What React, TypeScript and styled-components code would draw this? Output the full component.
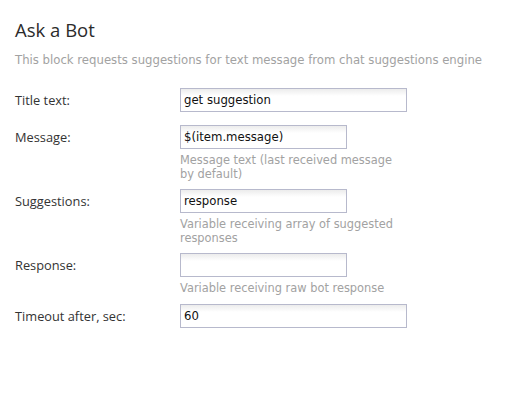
import styled, { createGlobalStyle } from "styled-components";

const GlobalStyle = createGlobalStyle`
  body {
    margin: 0;
    background: #ffffff;
    font-family: "Open Sans", "Liberation Sans", sans-serif;
  }
`;

const Page = styled.div`
  padding: 17px 15px 0 15px;
  width: 513px;
  box-sizing: border-box;
`;

const Title = styled.h2`
  margin: 0;
  font-family: "Open Sans", sans-serif;
  font-weight: 400;
  font-size: 18.5px;
  line-height: 26px;
  color: #2b2b2b;
`;

const Description = styled.p`
  margin: 9px 0 20px 0;
  font-family: "DejaVu Sans", Verdana, sans-serif;
  font-size: 11.7px;
  line-height: 16px;
  color: #a2a2a2;
  white-space: nowrap;
`;

const Form = styled.div`
  display: flex;
  flex-direction: column;
  gap: 8px;
`;

const Row = styled.div<{ $tail: number }>`
  display: grid;
  grid-template-columns: 165px 1fr;
  align-items: start;
  padding-bottom: ${(p) => p.$tail}px;
`;

const Label = styled.label`
  font-size: 12.8px;
  line-height: 24px;
  color: #333333;
`;

const Field = styled.div`
  display: flex;
  flex-direction: column;
`;

const Input = styled.input<{ $wide?: boolean }>`
  box-sizing: border-box;
  width: ${(p) => (p.$wide ? "227px" : "167px")};
  height: 24px;
  padding: 0 3px;
  border: 1px solid #b7b9cc;
  background: linear-gradient(#ececec 0px, #ffffff 7px, #ffffff 100%);
  font-family: "DejaVu Sans", Verdana, sans-serif;
  font-size: 11.7px;
  color: #111111;
  outline: none;
`;

const Hint = styled.div`
  margin-top: 5px;
  width: 225px;
  font-family: "DejaVu Sans", Verdana, sans-serif;
  font-size: 11.4px;
  line-height: 13.5px;
  color: #a2a2a2;
`;

type FieldDef = {
  label: string;
  value: string;
  wide?: boolean;
  hint?: string;
};

const fields: FieldDef[] = [
  { label: "Title text:", value: "get suggestion", wide: true },
  {
    label: "Message:",
    value: "$(item.message)",
    hint: "Message text (last received message by default)",
  },
  {
    label: "Suggestions:",
    value: "response",
    hint: "Variable receiving array of suggested responses",
  },
  {
    label: "Response:",
    value: "",
    hint: "Variable receiving raw bot response",
  },
  { label: "Timeout after, sec:", value: "60", wide: true },
];

export default function App() {
  return (
    <Page>
      <GlobalStyle />
      <Title>Ask a Bot</Title>
      <Description>
        This block requests suggestions for text message from chat suggestions
        engine
      </Description>
      <Form>
        {fields.map((f) => (
          <Row key={f.label} $tail={f.hint ? 0 : 5}>
            <Label>{f.label}</Label>
            <Field>
              <Input $wide={f.wide} defaultValue={f.value} />
              {f.hint && <Hint>{f.hint}</Hint>}
            </Field>
          </Row>
        ))}
      </Form>
    </Page>
  );
}
